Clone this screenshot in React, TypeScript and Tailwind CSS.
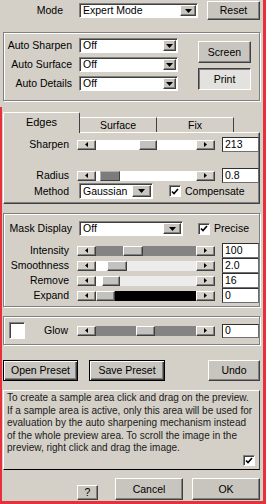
import React from "react";

const raised =
  "border border-t-white border-l-white border-r-[#404040] border-b-[#404040] shadow-[inset_-1px_-1px_#808080]";
const sunken =
  "border border-t-[#808080] border-l-[#808080] border-r-white border-b-white shadow-[inset_1px_1px_#404040]";
const etched = "border border-[#808080] shadow-[inset_1px_1px_white,1px_1px_white]";

type BtnProps = { label: string; className?: string; variant?: "normal" | "pressed" | "default" };

const Button: React.FC<BtnProps> = ({ label, className = "", variant = "normal" }) => {
  const look =
    variant === "pressed"
      ? "bg-[#e4e2de] border border-t-[#404040] border-l-[#404040] border-r-white border-b-white shadow-[inset_1px_1px_#808080]"
      : variant === "default"
      ? "bg-[#c8c5bf] border border-black shadow-[inset_1px_1px_white,inset_-1px_-1px_#404040,inset_-2px_-2px_#808080]"
      : `bg-[#c8c5bf] ${raised}`;
  return (
    <div className={`flex items-center justify-center text-[10.5px] leading-none text-black ${look} ${className}`}>
      {label}
    </div>
  );
};

const Select: React.FC<{ value: string; className: string; arrow: string }> = ({ value, className, arrow }) => (
  <div className={`flex items-center bg-white ${sunken} ${className}`}>
    <span className="flex-1 pl-[3px] text-[10.5px] leading-none">{value}</span>
    <div className={`mr-px flex h-[calc(100%-2px)] items-center justify-center bg-[#c8c5bf] ${raised} ${arrow}`}>
      <svg width="7" height="4" viewBox="0 0 7 4">
        <path d="M0 0h7L3.5 4z" fill="black" />
      </svg>
    </div>
  </div>
);

const Check: React.FC<{ className?: string }> = ({ className = "" }) => (
  <div className={`flex h-[12px] w-[12px] items-center justify-center bg-white ${sunken} ${className}`}>
    <svg width="8" height="7" viewBox="0 0 8 7">
      <path d="M1 3.5l2 2L7 1" stroke="black" strokeWidth="1.6" fill="none" />
    </svg>
  </div>
);

const ValueBox: React.FC<{ value: string; className?: string }> = ({ value, className = "h-[15px]" }) => (
  <div
    className={`ml-[7px] flex w-[37px] items-center border border-t-[#303030] border-l-[#303030] border-r-[#707070] border-b-[#707070] bg-white pl-[2px] text-[10.5px] leading-none ${className}`}
  >
    {value}
  </div>
);

type Kind = "w" | "l" | "d" | "k" | "t" | "dt";
const segClass: Record<Kind, string> = {
  w: "bg-white",
  l: "bg-[#ececec]",
  d: "bg-[#848484]",
  k: "bg-black",
  t: `bg-[#c4c2be] ${raised}`,
  dt: "bg-[#7c7c7c] border border-t-[#b0b0b0] border-l-[#b0b0b0] border-r-[#404040] border-b-[#404040]",
};

const SliderArrow: React.FC<{ dir: "l" | "r" }> = ({ dir }) => (
  <div className={`flex h-full w-[19px] shrink-0 items-center justify-center bg-[#d4d0c8] ${raised}`}>
    <svg width="3" height="5" viewBox="0 0 3 5">
      <path d={dir === "l" ? "M3 0v5L0 2.5z" : "M0 0v5L3 2.5z"} fill="black" />
    </svg>
  </div>
);

const Slider: React.FC<{ parts: [number, Kind][] }> = ({ parts }) => (
  <div className="ml-[8px] flex h-[10px] w-[138px]">
    <SliderArrow dir="l" />
    <div className="flex h-full w-[100px]">
      {parts.map(([w, k], i) => (
        <div key={i} className={`h-full ${segClass[k]}`} style={{ width: w }} />
      ))}
    </div>
    <SliderArrow dir="r" />
  </div>
);

const SliderRow: React.FC<{ label: string; value: string; parts: [number, Kind][]; className?: string }> = ({
  label,
  value,
  parts,
  className = "h-[15px]",
}) => (
  <div className={`flex items-center ${className}`}>
    <span className="w-[65px] text-right text-[10.5px] leading-none">{label}</span>
    <Slider parts={parts} />
    <ValueBox value={value} />
  </div>
);

export default function App() {
  return (
    <div className="relative flex h-[504px] w-[266px] flex-col border-r-[3px] border-b-[3px] border-r-[#e8303a] border-b-[#e8303a] bg-[#d4d0c8] font-['Liberation_Sans',Arial,sans-serif] text-black">
      <div className="absolute top-[107px] bottom-[-3px] left-0 w-[2px] bg-[#e8303a]" />

      {/* mode */}
      <div className="mt-px flex h-[19px] items-center">
        <span className="w-[63px] text-right text-[10.5px] leading-none">Mode</span>
        <Select value="Expert Mode" className="ml-[16px] h-[15px] w-[119px]" arrow="w-[16px]" />
        <Button label="Reset" className="ml-[9px] h-[19px] w-[53px]" />
      </div>

      {/* auto group */}
      <div className={`mx-[3px] mt-[12px] flex h-[69px] ${etched}`}>
        <div className="flex flex-col gap-[4px] pt-[5px]">
          {["Auto Sharpen", "Auto Surface", "Auto Details"].map((l) => (
            <div key={l} className="flex h-[15px] items-center">
              <span className="w-[68px] text-right text-[10.5px] leading-none">{l}</span>
              <Select value="Off" className="ml-[7px] h-[15px] w-[99px]" arrow="w-[13px]" />
            </div>
          ))}
        </div>
        <div className="ml-[20px] flex flex-col gap-[5px] pt-[8px]">
          <Button label="Screen" className="h-[22px] w-[53px]" />
          <Button label="Print" variant="pressed" className="h-[22px] w-[53px]" />
        </div>
      </div>

      {/* tabs */}
      <div className="relative z-10 mx-[3px] mt-[11px] flex h-[20px] items-end">
        <div className="-mb-px flex h-[21px] w-[77px] items-center justify-center rounded-t-[2px] border-t border-r border-l border-t-white border-r-[#404040] border-l-white bg-[#d4d0c8] pb-[2px] text-[11px] leading-none">
          Edges
        </div>
        <div className="flex h-[15px] w-[77px] items-center justify-center border-t border-r border-t-white border-r-[#404040] text-[10.5px] leading-none">
          Surface
        </div>
        <div className="flex h-[15px] w-[77px] items-center justify-center border-t border-r border-t-white border-r-[#404040] text-[10.5px] leading-none">
          Fix
        </div>
      </div>
      <div className="mx-[3px] flex h-[72px] flex-col border border-t-white border-l-white border-r-[#404040] border-b-[#404040] pt-[4px] shadow-[inset_-1px_-1px_#808080]">
        <SliderRow label="Sharpen" value="213" parts={[[43, "w"], [18, "t"], [39, "w"]]} />
        <SliderRow
          label="Radius"
          value="0.8"
          className="mt-[16px] h-[15px]"
          parts={[[4, "w"], [20, "dt"], [76, "w"]]}
        />
        <div className="flex h-[16px] items-center">
          <span className="w-[65px] text-right text-[10.5px] leading-none">Method</span>
          <Select value="Gaussian" className="ml-[10px] h-[16px] w-[74px]" arrow="w-[19px]" />
          <Check className="ml-[16px]" />
          <span className="ml-[4px] text-[10.5px] leading-none">Compensate</span>
        </div>
      </div>

      {/* mask group */}
      <div className={`mx-[3px] mt-[9px] flex h-[94px] flex-col pt-[7px] ${etched}`}>
        <div className="flex h-[15px] items-center">
          <span className="w-[68px] text-right text-[10.5px] leading-none">Mask Display</span>
          <Select value="Off" className="ml-[7px] h-[15px] w-[104px]" arrow="w-[18px]" />
          <Check className="ml-[15px]" />
          <span className="ml-[4px] text-[10.5px] leading-none">Precise</span>
        </div>
        <div className="mt-[7px] flex flex-col">
          <SliderRow label="Intensity" value="100" parts={[[27, "d"], [20, "t"], [53, "d"]]} />
          <SliderRow label="Smoothness" value="2.0" parts={[[11, "w"], [20, "t"], [69, "l"]]} />
          <SliderRow label="Remove" value="16" parts={[[6, "w"], [18, "t"], [76, "l"]]} />
          <SliderRow label="Expand" value="0" parts={[[19, "t"], [81, "k"]]} />
        </div>
      </div>

      {/* glow group */}
      <div className={`mx-[3px] mt-[9px] flex h-[29px] items-center ${etched}`}>
        <div className={`ml-[5px] h-[17px] w-[16px] bg-white ${sunken}`} />
        <span className="w-[43px] text-right text-[10.5px] leading-none">Glow</span>
        <div className="ml-px flex items-center">
          <Slider parts={[[40, "d"], [19, "t"], [41, "d"]]} />
          <ValueBox value="0" className="h-[14px]" />
        </div>
      </div>

      {/* preset buttons */}
      <div className="mt-[15px] flex h-[21px] pl-[3px]">
        <Button label="Open Preset" variant="default" className="h-[21px] w-[75px]" />
        <Button label="Save Preset" variant="default" className="ml-[11px] h-[21px] w-[76px]" />
        <Button label="Undo" className="ml-[43px] h-[21px] w-[52px]" />
      </div>

      {/* help text */}
      <div className="mx-[3px] mt-[9px] flex h-[80px] flex-col justify-between border border-t-white border-l-white border-r-[#404040] border-b-black">
        <div className="px-[3px] pt-px text-[10px] leading-[12.5px] whitespace-nowrap text-[#1a1a1a]">
          <div>To create a sample area click and drag on the preview.</div>
          <div>If a sample area is active, only this area will be used for</div>
          <div>evaluation by the auto sharpening mechanism instead</div>
          <div>of the whole preview area. To scroll the image in the</div>
          <div>preview, right click and drag the image.</div>
        </div>
        <Check className="mr-[4px] mb-[3px] self-end" />
      </div>

      {/* dialog buttons */}
      <div className="mt-[7px] flex h-[23px] items-end">
        <Button label="?" className="ml-[77px] h-[15px] w-[21px]" />
        <Button label="Cancel" className="ml-[17px] h-[22px] w-[68px]" />
        <Button label="OK" className="ml-[9px] h-[22px] w-[68px]" />
      </div>
    </div>
  );
}
